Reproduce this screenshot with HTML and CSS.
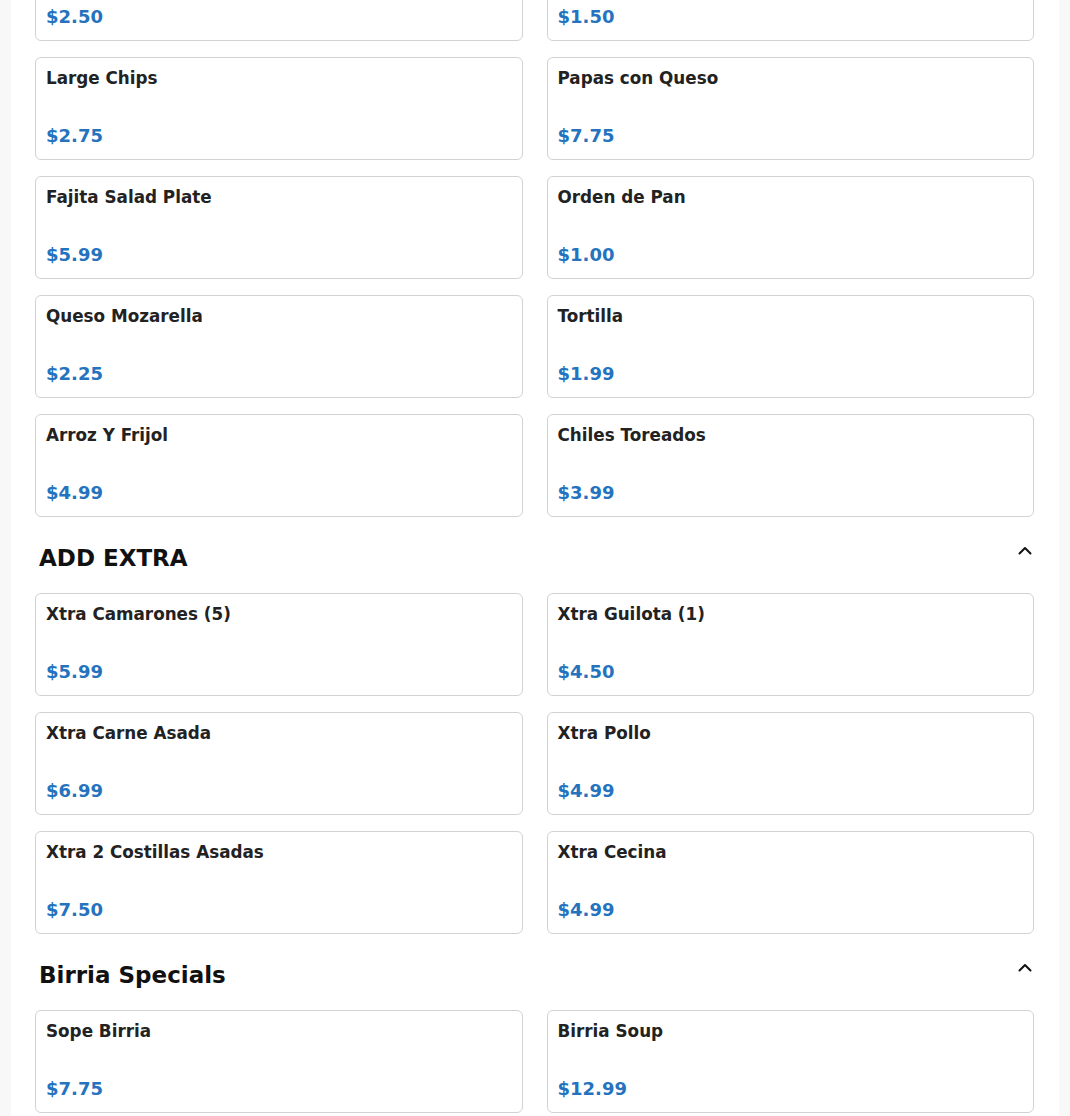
FILE: index.html
```html
<!DOCTYPE html>
<html lang="en">
<head>
<meta charset="utf-8">
<title>Menu</title>
<link rel="stylesheet" href="styles.css">
</head>
<body>
<main class="page">
  <div class="menu">
    <section class="section section-cut">
      <div class="grid">
        <div class="card"><div class="name">Chips</div><div class="price">$2.50</div></div>
        <div class="card"><div class="name">Salsa</div><div class="price">$1.50</div></div>
        <div class="card"><div class="name">Large Chips</div><div class="price">$2.75</div></div>
        <div class="card"><div class="name">Papas con Queso</div><div class="price">$7.75</div></div>
        <div class="card"><div class="name">Fajita Salad Plate</div><div class="price">$5.99</div></div>
        <div class="card"><div class="name">Orden de Pan</div><div class="price">$1.00</div></div>
        <div class="card"><div class="name">Queso Mozarella</div><div class="price">$2.25</div></div>
        <div class="card"><div class="name">Tortilla</div><div class="price">$1.99</div></div>
        <div class="card"><div class="name">Arroz Y Frijol</div><div class="price">$4.99</div></div>
        <div class="card"><div class="name">Chiles Toreados</div><div class="price">$3.99</div></div>
      </div>
    </section>

    <section class="section">
      <div class="section-head">
        <h2 class="section-title">ADD EXTRA</h2>
        <svg class="chevron" width="16" height="16" viewBox="0 0 16 16" aria-hidden="true"><path d="M2.5 10.5 L8 5 L13.5 10.5" fill="none" stroke="#111" stroke-width="2" stroke-linecap="round" stroke-linejoin="round"/></svg>
      </div>
      <div class="grid">
        <div class="card"><div class="name">Xtra Camarones (5)</div><div class="price">$5.99</div></div>
        <div class="card"><div class="name">Xtra Guilota (1)</div><div class="price">$4.50</div></div>
        <div class="card"><div class="name">Xtra Carne Asada</div><div class="price">$6.99</div></div>
        <div class="card"><div class="name">Xtra Pollo</div><div class="price">$4.99</div></div>
        <div class="card"><div class="name">Xtra 2 Costillas Asadas</div><div class="price">$7.50</div></div>
        <div class="card"><div class="name">Xtra Cecina</div><div class="price">$4.99</div></div>
      </div>
    </section>

    <section class="section">
      <div class="section-head">
        <h2 class="section-title">Birria Specials</h2>
        <svg class="chevron" width="16" height="16" viewBox="0 0 16 16" aria-hidden="true"><path d="M2.5 10.5 L8 5 L13.5 10.5" fill="none" stroke="#111" stroke-width="2" stroke-linecap="round" stroke-linejoin="round"/></svg>
      </div>
      <div class="grid">
        <div class="card"><div class="name">Sope Birria</div><div class="price">$7.75</div></div>
        <div class="card"><div class="name">Birria Soup</div><div class="price">$12.99</div></div>
      </div>
    </section>
  </div>
</main>
</body>
</html>
```

FILE: styles.css
```css
html, body {
  margin: 0;
  padding: 0;
}

body {
  background: #f8f8f9;
  font-family: "DejaVu Sans", "Liberation Sans", sans-serif;
  color: #1e1e1e;
}

.page {
  width: 1048px;
  margin: 0 auto;
  background: #ffffff;
  min-height: 1116px;
  overflow: hidden;
}

.menu {
  padding: 0 25px 40px 24px;
  margin-top: -62px;
}

.section-cut {
  margin: 0;
}

.section-head {
  display: flex;
  justify-content: space-between;
  align-items: flex-start;
  margin: 28px 0 21px;
  padding: 0 1px 0 4px;
}

.section-title {
  margin: 0;
  font-size: 23px;
  line-height: 27px;
  font-weight: 700;
  color: #111;
}

.chevron {
  display: block;
  margin-top: -2px;
}

.grid {
  display: grid;
  grid-template-columns: 1fr 1fr;
  column-gap: 24px;
  row-gap: 16px;
}

.card {
  box-sizing: border-box;
  height: 103px;
  border: 1px solid #d2d2d2;
  border-radius: 6px;
  padding: 10px 10px 13px;
  display: flex;
  flex-direction: column;
  justify-content: space-between;
  background: #fff;
}

.name {
  font-size: 16.8px;
  line-height: 20px;
  font-weight: 700;
  color: #222;
}

.price {
  font-size: 18px;
  line-height: 21px;
  font-weight: 700;
  color: #2573be;
}
```
